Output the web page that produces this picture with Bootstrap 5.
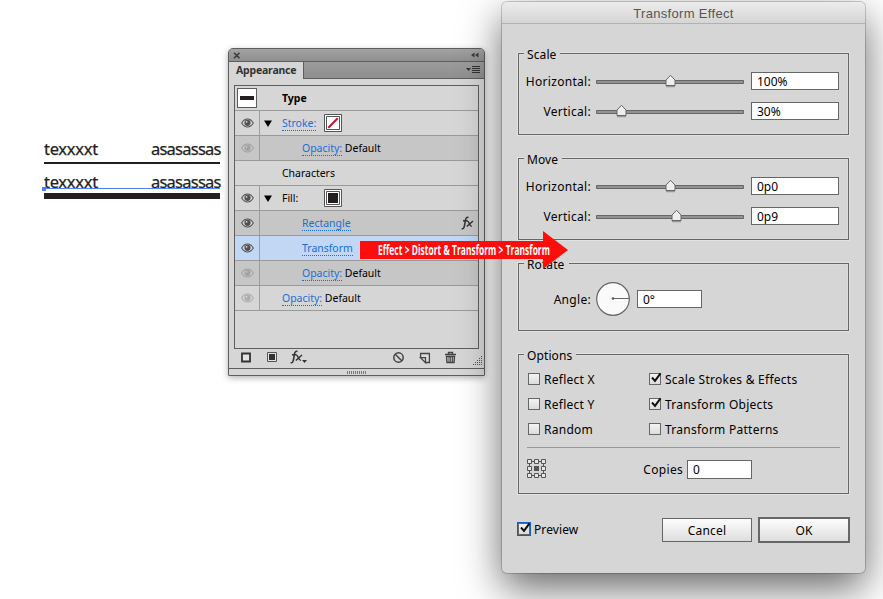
<!DOCTYPE html>
<html lang="en">
<head>
<meta charset="utf-8">
<meta name="viewport" content="width=device-width, initial-scale=1">
<title>Transform Effect</title>
<link rel="stylesheet" href="https://cdn.jsdelivr.net/npm/bootstrap@5.3.0/dist/css/bootstrap.min.css">
<style>
body{width:883px;height:599px;font-family:"Noto Sans","Open Sans",sans-serif;font-size:12px;line-height:16px;letter-spacing:.1px;color:#000;background:#fff}
svg{display:block}
/* artboard */
.artboard{left:44px;top:138px;width:176px;color:#231f20;font-size:16.5px;line-height:22px;letter-spacing:-.28px;-webkit-text-stroke:.25px #231f20}
.art-right{letter-spacing:-.75px;margin-right:-.75px}
.art-second{padding-top:7px}
.line-thin{height:2px;background:#231f20;margin-top:2px}
.line-thick{height:6px;background:#231f20}
.baseline{left:-2px;bottom:8px;width:178px}
/* appearance panel */
.panel{left:228px;top:48px;width:257px;height:328px;background:#d6d6d6;border:1px solid #5e5e5e;border-radius:5px 5px 1px 1px;box-shadow:0 2px 6px rgba(0,0,0,.3);font-size:10.5px;letter-spacing:-.02px;overflow:hidden}
.panel-bar{height:13px;background:linear-gradient(#a3a3a3,#8f8f8f);border-bottom:1px solid #5e5e5e;padding:0 5px 0 4px}
.panel-tabs{height:17px;background:linear-gradient(#9c9c9c,#8e8e8e)}
.panel-tab{width:75px;height:17px;padding-left:7px;background:#d6d6d6;border-right:1px solid #5e5e5e;font-weight:700;font-size:10.5px;letter-spacing:-.2px;line-height:16px;color:#333}
.tab-rest{border-bottom:1px solid #5e5e5e;padding-right:4px}
.rows{margin:6px 5px 0;height:264px;border:1px solid #5e5e5e}
.prow{height:25px;border-bottom:1px solid #9a9a9a}
.prow.dim{background:#c6c6c6}
.prow.sel{background:#c1d7f4}
.eye-cell{width:25px;height:24px;border-right:1px solid #9a9a9a;opacity:.9}
.faint{opacity:.3}
.prow a{color:#1a6fd6;text-decoration:none;line-height:13px;border-bottom:1px dotted #1a6fd6}
.arrow-cell{width:22px;padding-left:4px}
.indent{padding-left:42px}
.indent-sm{padding-left:22px}
.name-type{margin-left:23px}
.name-chars{margin-left:47px}
.name-slot{width:42px}
.type-thumb{width:20px;height:20px;border:1px solid #5e5e5e;background:#fff;margin:1px 2px}
.swatch{width:18px;height:18px}
.panel-foot{height:20px;border-bottom:1px solid #5e5e5e}
.grip{width:19px;height:3px;margin:2px auto 0;background:repeating-linear-gradient(90deg,#777 0 1px,transparent 1px 2px)}
/* dialog */
.dialog{left:502px;top:2px;width:363px;height:571px;background:#d6d6d6;border-radius:5px;box-shadow:0 0 0 1px rgba(0,0,0,.18),0 15px 40px rgba(0,0,0,.6);z-index:2}
.dialog-title{height:22px;border-bottom:1px solid #b1b1b1;border-radius:5px 5px 0 0;background:linear-gradient(#ececec,#d5d5d5);font:13px/24px "Liberation Sans",Arial,sans-serif;color:#555;letter-spacing:.32px}
.dialog-body{padding:29px 16px 0}
.group{border:1px solid #666;box-shadow:0 0 0 1px rgba(255,255,255,.3),inset 0 0 0 1px rgba(255,255,255,.15);margin-bottom:23px}
.group-tall{height:82px}
.group-rotate{height:68px}
.group-options{height:140px}
.group-name{width:fit-content;height:16px;margin:-8px 0 0 5px;padding:1px 4px 0 3px;background:#d6d6d6;line-height:16px}
.field-row{height:18px;margin-top:12px}
.group-name + .field-row{margin-top:10px}
.field-label{width:73px;text-align:right;margin-right:4px;padding:2px 1px 0 0;letter-spacing:.3px;white-space:nowrap}
.field-label.wide{width:136px;padding-right:0;letter-spacing:.3px}
.slider{width:148px;height:18px;margin-right:7px}
.field-input{width:88px;height:18px;border:1px solid #666;background:#fff;padding:0 0 0 5px;line-height:17px;outline:0;color:#000}
.field-input.narrow{width:65px}
.angle-row{margin-top:10px}
.opt-cols{margin-top:4px;padding-left:9px;letter-spacing:.26px}
.opt-left{width:121px}
.opt-row{height:25px}
.box{width:12px;height:12px;border:1px solid #666;background:linear-gradient(#f4f4f4,#dcdcdc);margin-right:4px}
.opt-row .box{margin-bottom:1px}
.box svg{margin:-2px 0 0 -1px;overflow:visible}
.focus-box{outline:1px solid #1a5bcb;margin-bottom:2px}
.rule{height:1px;margin:5px 8px 0;background:#999}
.copies-row{margin:11px 0 0 8px}
.copies-row .field-input{height:19px}
.dbtn{width:90px;height:24px;border:1px solid #666;border-radius:0;background:linear-gradient(#fdfdfd,#dedede);padding:0;font-size:12px;line-height:23px;color:#000;letter-spacing:.2px}
.dbtn.primary{width:92px;height:26px;border-width:2px;margin:0 -1px 0 6px}
/* callout */
.callout{left:360px;top:231px;z-index:3}
</style>
</head>
<body class="position-relative overflow-hidden m-0">

<main class="position-absolute artboard">
  <div class="d-flex justify-content-between"><span>texxxxt</span><span class="art-right">asasassas</span></div>
  <div class="line-thin"></div>
  <div class="position-relative">
    <div class="d-flex justify-content-between art-second"><span>texxxxt</span><span class="art-right">asasassas</span></div>
    <div class="line-thick"></div>
    <svg class="position-absolute baseline" height="4" viewBox="0 0 178 4"><rect width="4" height="4" fill="#4f80ff"/><rect y="1" width="178" height="1" fill="#4f80ff"/></svg>
  </div>
</main>

<svg width="0" height="0" class="position-absolute">
  <defs>
    <symbol id="eye" viewBox="0 0 13 10"><path d="M.7 5C2.5 1.8 4.500 1 6.500 1s4 .8 5.800 4C10.500 8 8.500 9 6.500 9S2.500 8 .7 5z" fill="#d8d8d8" stroke="#444" stroke-width="1.100"/><circle cx="6.500" cy="4.800" r="3.100" fill="#444"/><circle cx="5.600" cy="3.800" r=".9" fill="#ddd"/></symbol>
    <symbol id="thumb" viewBox="0 0 12 14"><path d="M1.500 12.500h9" stroke="#999" stroke-width="1.500"/><path d="M6 1.300 10.500 6v5.500h-9V6z" fill="#eee" stroke="#666"/></symbol>
    <symbol id="tick" viewBox="0 0 13 12"><path d="M3 5.500l3 3.300L11.500 1.300" fill="none" stroke="#111" stroke-width="2"/></symbol>
    <symbol id="fx" viewBox="0 0 13 14"><path d="M.6 12.800c1.900.4 2.500-1 3-3.800l.9-5C4.900 1.900 5.700.9 7.500 1.500M2 4.800h4.600M6.300 5.200c1.900-.5 2.200 5.600 4.500 5M12 5L5.800 10.500" fill="none" stroke="#333" stroke-width="1.500"/></symbol>
  </defs>
</svg>

<section class="position-absolute panel">
  <div class="panel-bar d-flex justify-content-between align-items-center">
    <svg width="8" height="7" viewBox="0 0 8 7"><path d="M1 .8l5.500 5.400M6.500.8L1 6.200" stroke="#3c3c3c" stroke-width="1.600"/></svg>
    <svg width="8" height="6" viewBox="0 0 8 6"><path d="M3.500 .5v5L0 3zM7.500 .5v5L4 3z" fill="#3c3c3c"/></svg>
  </div>
  <div class="panel-tabs d-flex">
    <div class="panel-tab">Appearance</div>
    <div class="tab-rest flex-grow-1 d-flex justify-content-end align-items-center">
      <svg width="14" height="8" viewBox="0 0 14 8"><path d="M0 2h5L2.500 5z" fill="#333"/><path d="M6 .5h8M6 2.500h8M6 4.500h8M6 6.500h8" stroke="#333"/></svg>
    </div>
  </div>
  <div class="rows">
    <div class="prow d-flex align-items-center"><div class="type-thumb d-flex align-items-center justify-content-center"><svg width="14" height="4"><rect width="14" height="4" fill="#231f20"/></svg></div><b class="name-type">Type</b></div>
    <div class="prow d-flex align-items-center">
      <div class="eye-cell d-flex align-items-center justify-content-center"><svg width="13" height="10"><use href="#eye"/></svg></div>
      <div class="arrow-cell"><svg width="8" height="7"><path d="M0 .5h8L4 7z"/></svg></div>
      <div class="name-slot"><a href="#">Stroke:</a></div>
      <svg class="swatch" viewBox="0 0 18 18"><path d="M.5.5h17v17H.5z" fill="#fff" stroke="#555"/><path d="M2.500 2.500h13v13h-13z" fill="#fff" stroke="#555"/><path d="M4.300 13.700l9.400-9.400" stroke="#c8102e" stroke-width="2"/></svg>
    </div>
    <div class="prow dim d-flex align-items-center"><div class="eye-cell d-flex align-items-center justify-content-center"><svg class="faint" width="13" height="10"><use href="#eye"/></svg></div><div class="indent"><a href="#">Opacity:</a> <span>Default</span></div></div>
    <div class="prow d-flex align-items-center"><span class="name-chars">Characters</span></div>
    <div class="prow d-flex align-items-center">
      <div class="eye-cell d-flex align-items-center justify-content-center"><svg width="13" height="10"><use href="#eye"/></svg></div>
      <div class="arrow-cell"><svg width="8" height="7"><path d="M0 .5h8L4 7z"/></svg></div>
      <span class="name-slot">Fill:</span>
      <svg class="swatch" viewBox="0 0 18 18"><path d="M.5.5h17v17H.5z" fill="#fff" stroke="#555"/><path d="M2.500 2.500h13v13h-13z" fill="#fff" stroke="#555"/><path d="M4 4h10v10H4z" fill="#231f20"/></svg>
    </div>
    <div class="prow dim d-flex align-items-center"><div class="eye-cell d-flex align-items-center justify-content-center"><svg width="13" height="10"><use href="#eye"/></svg></div><div class="indent flex-grow-1"><a href="#">Rectangle</a></div>
      <svg width="13" height="14" class="me-1"><use href="#fx"/></svg></div>
    <div class="prow sel d-flex align-items-center"><div class="eye-cell d-flex align-items-center justify-content-center"><svg width="13" height="10"><use href="#eye"/></svg></div><div class="indent"><a href="#">Transform</a></div></div>
    <div class="prow dim d-flex align-items-center"><div class="eye-cell d-flex align-items-center justify-content-center"><svg class="faint" width="13" height="10"><use href="#eye"/></svg></div><div class="indent"><a href="#">Opacity:</a> <span>Default</span></div></div>
    <div class="prow d-flex align-items-center"><div class="eye-cell d-flex align-items-center justify-content-center"><svg class="faint" width="13" height="10"><use href="#eye"/></svg></div><div class="indent-sm"><a href="#">Opacity:</a> <span>Default</span></div></div>
  </div>
  <div class="panel-foot">
    <svg width="255" height="19" viewBox="0 0 255 19">
      <path d="M13 4.500h8v8h-8z" fill="#e4e4e4" stroke="#333" stroke-width="1.800"/>
      <path d="M38.500 3.500h9v9h-9z" fill="#e4e4e4" stroke="#555"/><path d="M40 5h6v6h-6z" fill="#333"/>
      <use href="#fx" x="61" y="1" width="13" height="14"/><path d="M73 11h5l-2.500 3z" fill="#333"/>
      <circle cx="169.500" cy="8.500" r="4.700" fill="none" stroke="#444" stroke-width="1.500"/><path d="M166 5l7 7" stroke="#444" stroke-width="1.500"/>
      <path d="M191.600 8V4.500h8.800v9H197M191.500 8.700h5v5z" fill="#ddd" stroke="#444" stroke-width="1.300"/>
      <path d="M216 5.500h11M219.500 5v-1.500h4V5M217.500 7.500l.5 6h7l.5-6z" fill="none" stroke="#444" stroke-width="1.400"/><path d="M220 8v5M221.700 8v5M223.400 8v5" stroke="#444"/>
      <path d="M252.500 7v10M250.500 9v8M248.500 11v6M246.500 13v4M244.500 15v2" stroke="#555" stroke-dasharray="1 1"/>
    </svg>
  </div>
  <div class="grip"></div>
</section>

<section class="position-absolute dialog">
  <div class="dialog-title text-center">Transform Effect</div>
  <div class="dialog-body">
    <div class="group group-tall">
      <div class="group-name">Scale</div>
      <div class="field-row d-flex align-items-center"><label class="field-label">Horizontal:</label>
        <svg class="slider"><path d="M.5 8.500h147v3H.5z" fill="#939393" stroke="#666"/><use href="#thumb" x="68.500" y="2" width="12" height="14"/></svg><input class="field-input" value="100%"></div>
      <div class="field-row d-flex align-items-center"><label class="field-label">Vertical:</label>
        <svg class="slider"><path d="M.5 8.500h147v3H.5z" fill="#939393" stroke="#666"/><use href="#thumb" x="19.500" y="2" width="12" height="14"/></svg><input class="field-input" value="30%"></div>
    </div>
    <div class="group group-tall">
      <div class="group-name">Move</div>
      <div class="field-row d-flex align-items-center"><label class="field-label">Horizontal:</label>
        <svg class="slider"><path d="M.5 8.500h147v3H.5z" fill="#939393" stroke="#666"/><use href="#thumb" x="68.500" y="2" width="12" height="14"/></svg><input class="field-input" value="0p0"></div>
      <div class="field-row d-flex align-items-center"><label class="field-label">Vertical:</label>
        <svg class="slider"><path d="M.5 8.500h147v3H.5z" fill="#939393" stroke="#666"/><use href="#thumb" x="74.500" y="2" width="12" height="14"/></svg><input class="field-input" value="0p9"></div>
    </div>
    <div class="group group-rotate">
      <div class="group-name">Rotate</div>
      <div class="d-flex align-items-center angle-row"><label class="field-label">Angle:</label>
        <svg width="34" height="34" style="margin-right:7px"><circle cx="17" cy="17" r="16.300" fill="#fafafa" stroke="#666" stroke-width="1.200"/><path d="M17 16.500h16" stroke="#666"/><circle cx="17" cy="16.500" r="1.300" fill="#555"/></svg><input class="field-input narrow" value="0°"></div>
    </div>
    <div class="group group-options">
      <div class="group-name">Options</div>
      <div class="d-flex opt-cols">
        <div class="opt-left">
          <div class="opt-row d-flex align-items-center"><span class="box"></span>Reflect X</div>
          <div class="opt-row d-flex align-items-center"><span class="box"></span>Reflect Y</div>
          <div class="opt-row d-flex align-items-center"><span class="box"></span>Random</div>
        </div>
        <div>
          <div class="opt-row d-flex align-items-center"><span class="box"><svg width="13" height="12"><use href="#tick"/></svg></span>Scale Strokes &amp; Effects</div>
          <div class="opt-row d-flex align-items-center"><span class="box"><svg width="13" height="12"><use href="#tick"/></svg></span>Transform Objects</div>
          <div class="opt-row d-flex align-items-center"><span class="box"></span>Transform Patterns</div>
        </div>
      </div>
      <div class="rule"></div>
      <div class="d-flex align-items-center copies-row">
        <svg width="20" height="20" viewBox="0 0 20 20"><path d="M2.500 2.500h14v14h-14z" fill="none" stroke="#555"/><g fill="#e6e6e6" stroke="#555"><path d="M.5.5h4v4h-4zM7.500.5h4v4h-4zM14.500.5h4v4h-4zM.5 7.500h4v4h-4zM14.500 7.500h4v4h-4zM.5 14.500h4v4h-4zM7.500 14.500h4v4h-4zM14.500 14.500h4v4h-4z"/></g><path d="M7 7h5v5H7z" fill="#555"/></svg>
        <label class="field-label wide">Copies</label><input class="field-input narrow" value="0">
      </div>
    </div>
    <div class="d-flex align-items-center">
      <span class="box focus-box"><svg width="13" height="12"><use href="#tick"/></svg></span><span>Preview</span>
      <button class="btn dbtn ms-auto">Cancel</button><button class="btn dbtn primary">OK</button>
    </div>
  </div>
</section>

<svg class="position-absolute callout" width="209" height="38" viewBox="0 0 209 38">
  <path d="M0 10h183V0l25 19-25 19V28H0z" fill="#fe0d0d"/>
  <text x="18" y="24" textLength="172" lengthAdjust="spacingAndGlyphs" font-family="Open Sans, Noto Sans, sans-serif" font-size="13.500" font-weight="700" fill="#fff">Effect &gt; Distort &amp; Transform &gt; Transform</text>
</svg>
<script src="https://cdn.jsdelivr.net/npm/bootstrap@5.3.0/dist/js/bootstrap.bundle.min.js"></script>
</body>
</html>
